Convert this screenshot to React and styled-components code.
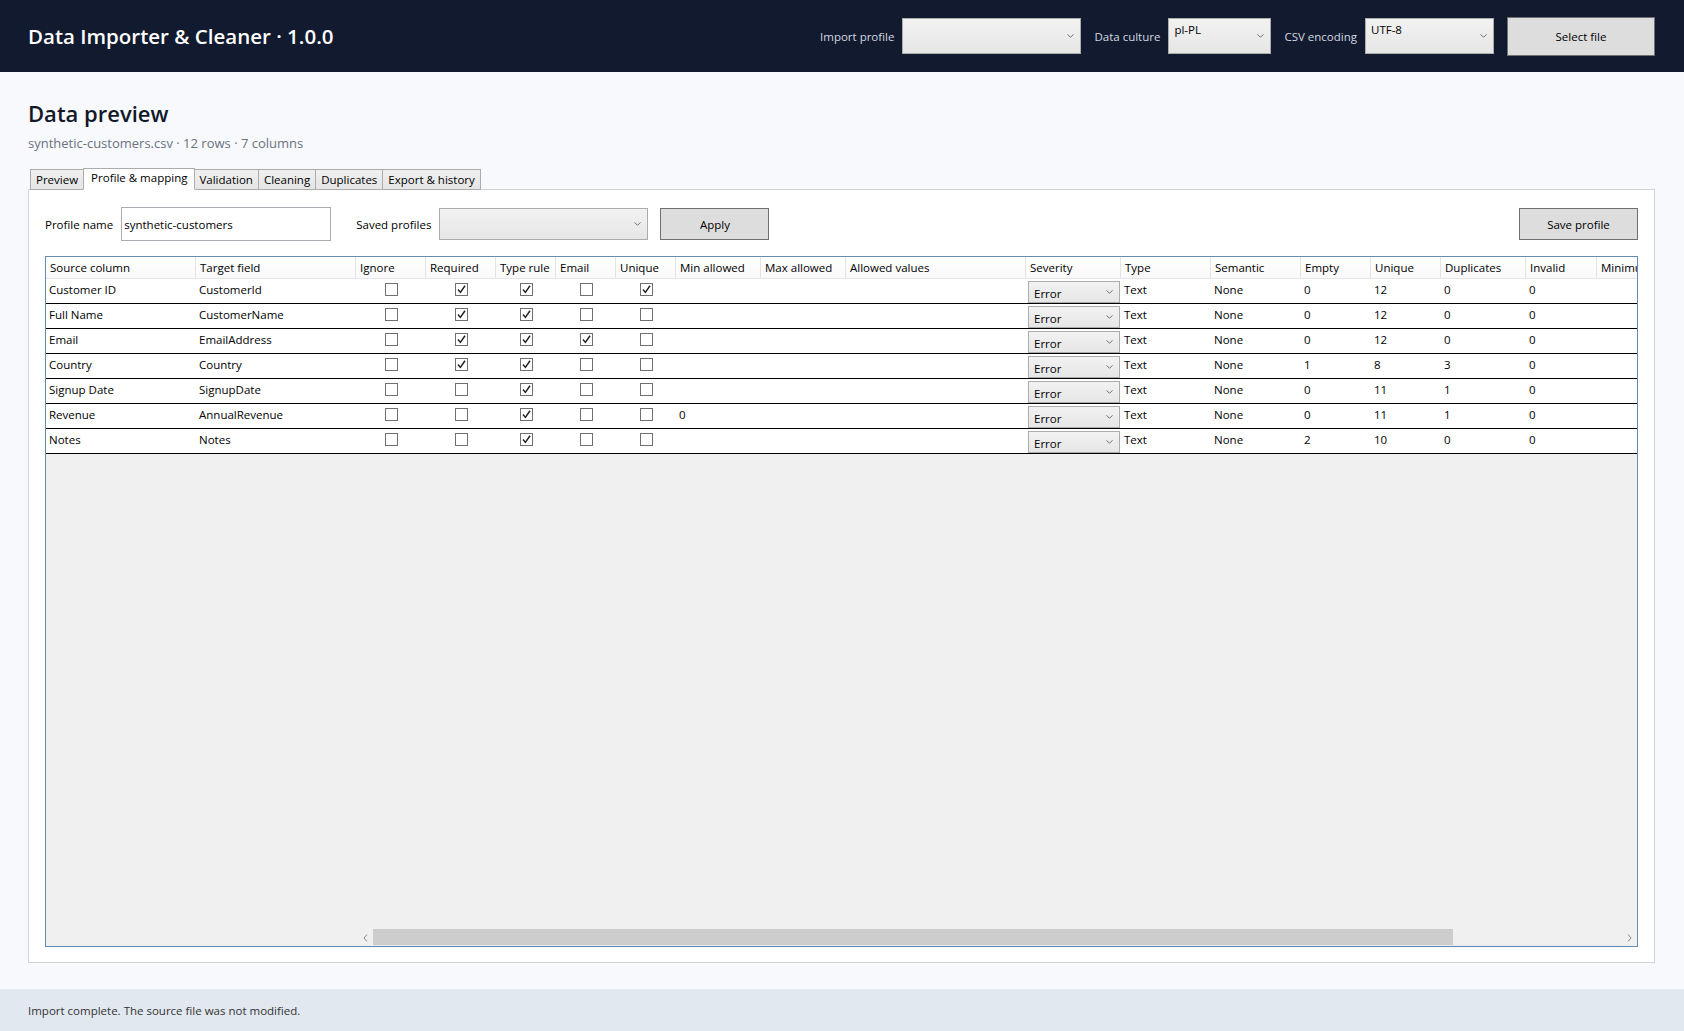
import React from "react";
import styled, { createGlobalStyle } from "styled-components";

// Global page reset
const GlobalStyle = createGlobalStyle`
  html, body {
    margin: 0;
    padding: 0;
  }
  body {
    font-family: "Open Sans", "Noto Sans", sans-serif;
    color: #000;
    background: #f7f9fc;
  }
  * {
    box-sizing: border-box;
  }
`;

// Data
const columns = [
  { key: "source", title: "Source column", w: 150 },
  { key: "target", title: "Target field", w: 160 },
  { key: "ignore", title: "Ignore", w: 70, check: true },
  { key: "required", title: "Required", w: 70, check: true },
  { key: "typeRule", title: "Type rule", w: 60, check: true },
  { key: "email", title: "Email", w: 60, check: true },
  { key: "unique", title: "Unique", w: 60, check: true },
  { key: "min", title: "Min allowed", w: 85 },
  { key: "max", title: "Max allowed", w: 85 },
  { key: "allowed", title: "Allowed values", w: 180 },
  { key: "severity", title: "Severity", w: 95, combo: true },
  { key: "type", title: "Type", w: 90 },
  { key: "semantic", title: "Semantic", w: 90 },
  { key: "empty", title: "Empty", w: 70 },
  { key: "uniq", title: "Unique", w: 70 },
  { key: "dup", title: "Duplicates", w: 85 },
  { key: "invalid", title: "Invalid", w: 71 },
  { key: "minimum", title: "Minimum", w: 90 },
  { key: "maximum", title: "Maximum", w: 90 },
];

const row = (source, target, required, email, unique, min, empty, uniq, dup) => ({
  source,
  target,
  ignore: false,
  required,
  typeRule: true,
  email,
  unique,
  min,
  max: "",
  allowed: "",
  severity: "Error",
  type: "Text",
  semantic: "None",
  empty,
  uniq,
  dup,
  invalid: "0",
  minimum: "",
  maximum: "",
});

const rows = [
  row("Customer ID", "CustomerId", true, false, true, "", "0", "12", "0"),
  row("Full Name", "CustomerName", true, false, false, "", "0", "12", "0"),
  row("Email", "EmailAddress", true, true, false, "", "0", "12", "0"),
  row("Country", "Country", true, false, false, "", "1", "8", "3"),
  row("Signup Date", "SignupDate", false, false, false, "", "0", "11", "1"),
  row("Revenue", "AnnualRevenue", false, false, false, "0", "0", "11", "1"),
  row("Notes", "Notes", false, false, false, "", "2", "10", "0"),
];

const tabs = ["Preview", "Profile & mapping", "Validation", "Cleaning", "Duplicates", "Export & history"];

// Layout
const Page = styled.div`
  display: flex;
  flex-direction: column;
  height: 100vh;
`;

const Header = styled.header`
  height: 72px;
  flex-shrink: 0;
  background: #111a2e;
  display: flex;
  align-items: center;
  justify-content: space-between;
  padding: 0 29px 0 28px;
`;

const AppTitle = styled.h1`
  margin: 0;
  color: #fff;
  font-size: 20.5px;
  font-weight: 600;
`;

const Toolbar = styled.div`
  display: flex;
  align-items: center;
  gap: 13px;
`;

const Field = styled.label`
  display: flex;
  align-items: center;
  gap: 8px;
  font-size: 11.5px;
  color: ${(p) => (p.$dark ? "#d3d8e0" : "#000")};
`;

const Combo = styled.div`
  position: relative;
  width: ${(p) => p.$w}px;
  height: ${(p) => p.$h || 36}px;
  background: linear-gradient(#f2f2f2, #e6e6e6);
  border: 1px solid #acacac;
  font-size: 11.5px;
  color: #000;
  padding: ${(p) => p.$pad || "3px 5px"};
  line-height: 16px;
  flex-shrink: 0;
`;

const Chevron = styled.svg`
  position: absolute;
  right: ${(p) => p.$right || 6}px;
  top: 50%;
  transform: translateY(-50%);
`;

const Button = styled.button`
  width: ${(p) => p.$w}px;
  height: ${(p) => p.$h}px;
  background: #dddddd;
  border: 1px solid #707070;
  font-family: inherit;
  font-size: 11.5px;
  color: #000;
  padding: 0;
  margin-left: ${(p) => (p.$push ? "auto" : "0")};
`;

const Main = styled.main`
  flex: 1;
  display: flex;
  flex-direction: column;
  padding: 26px 29px 26px 28px;
  min-height: 0;
`;

const Title = styled.h2`
  margin: 0;
  font-size: 22px;
  line-height: 30px;
  font-weight: 600;
  color: #111827;
`;

const Subtitle = styled.div`
  margin-top: 6px;
  font-size: 13px;
  line-height: 18px;
  color: #6b7280;
`;

const TabStrip = styled.div`
  display: flex;
  align-items: flex-end;
  margin-top: 16px;
  padding-left: 2px;
  height: 22px;
  position: relative;
  z-index: 1;
  margin-bottom: -1px;
`;

const Tab = styled.div`
  height: ${(p) => (p.$active ? 22 : 21)}px;
  padding: 0 ${(p) => (p.$active ? 7 : 5)}px;
  margin: 0 ${(p) => (p.$active ? -1 : 0)}px 0 -1px;
  border: 1px solid #acacac;
  border-bottom: ${(p) => (p.$active ? "1px solid #fff" : "1px solid #acacac")};
  background: ${(p) => (p.$active ? "#fff" : "linear-gradient(#f0f0f0, #e5e5e5)")};
  font-size: 11.5px;
  line-height: ${(p) => (p.$active ? 17 : 19)}px;
  position: relative;
  z-index: ${(p) => (p.$active ? 2 : 1)};
  white-space: nowrap;
  &:first-child {
    margin-left: 0;
  }
`;

const Panel = styled.section`
  flex: 1;
  min-height: 0;
  background: #fff;
  border: 1px solid #cfd3da;
  padding: 17px 16px 15px 16px;
  display: flex;
  flex-direction: column;
`;

const FormRow = styled.div`
  display: flex;
  align-items: center;
  height: 34px;
  flex-shrink: 0;
`;

const TextBox = styled.div`
  width: 210px;
  height: 34px;
  border: 1px solid #abadb3;
  background: #fff;
  font-size: 11.5px;
  display: flex;
  align-items: center;
  padding-left: 2px;
`;

const Spacer = styled.div`
  width: ${(p) => p.$w}px;
  flex-shrink: 0;
`;

// Data grid
const Grid = styled.div`
  margin-top: 15px;
  flex: 1;
  min-height: 0;
  border: 1px solid #688caf;
  background: #f0f0f0;
  display: flex;
  flex-direction: column;
  overflow: hidden;
`;

const Viewport = styled.div`
  flex: 1;
  min-height: 0;
  overflow: hidden;
`;

const HeaderRow = styled.div`
  display: flex;
  height: 22px;
  background: linear-gradient(#ffffff, #f9f9f9);
  border-bottom: 1px solid #e3e6ea;
  width: max-content;
  min-width: 100%;
`;

const HeaderCell = styled.div`
  width: ${(p) => p.$w}px;
  flex-shrink: 0;
  padding-left: 4px;
  font-size: 11.5px;
  line-height: 21px;
  border-right: 1px solid #e2e4e7;
  white-space: nowrap;
  overflow: hidden;
`;

const Row = styled.div`
  display: flex;
  height: 25px;
  background: #fff;
  border-bottom: 1px solid #000;
  width: max-content;
  min-width: 100%;
`;

const Cell = styled.div`
  width: ${(p) => p.$w}px;
  flex-shrink: 0;
  padding: ${(p) => (p.$center ? "4px 0 0" : p.$combo ? "2px 0 0 2px" : "3px 0 0 3px")};
  font-size: 11.5px;
  line-height: 16px;
  white-space: nowrap;
  overflow: hidden;
  display: flex;
  justify-content: ${(p) => (p.$center ? "center" : "flex-start")};
  align-items: flex-start;
`;

const Box = styled.span`
  width: 13px;
  height: 13px;
  border: 1px solid #707070;
  background: #fff;
  display: flex;
  align-items: center;
  justify-content: center;
`;

const HScroll = styled.div`
  height: 17px;
  flex-shrink: 0;
  display: flex;
  margin-left: 312px;
  background: #f0f0f0;
`;

const Arrow = styled.div`
  width: 15px;
  display: flex;
  align-items: center;
  justify-content: center;
  flex-shrink: 0;
`;

const Track = styled.div`
  flex: 1;
  display: flex;
  border-bottom: 1px solid #e6eaef;
`;

const Thumb = styled.div`
  width: ${(p) => p.$pct}%;
  background: #cdcdcd;
`;

const StatusBar = styled.footer`
  height: 42px;
  flex-shrink: 0;
  background: #e2e8f0;
  padding-left: 28px;
  display: flex;
  align-items: center;
  font-size: 11.5px;
  color: #333;
`;

// Small parts
function ChevronDown({ right }) {
  return (
    <Chevron $right={right} width="7" height="5" viewBox="0 0 7 5">
      <path d="M0.5 0.8 L3.5 3.8 L6.5 0.8" fill="none" stroke="#707070" strokeWidth="1" />
    </Chevron>
  );
}

function CheckBox({ checked }) {
  return (
    <Box>
      {checked && (
        <svg width="9" height="9" viewBox="0 0 9 9">
          <path d="M1 4.6 L3.4 7.4 L8 0.8" fill="none" stroke="#212121" strokeWidth="1.5" />
        </svg>
      )}
    </Box>
  );
}

function ArrowGlyph({ dir }) {
  return (
    <svg width="5" height="8" viewBox="0 0 5 8">
      <path
        d={dir === "left" ? "M4 0.5 L1 4 L4 7.5" : "M1 0.5 L4 4 L1 7.5"}
        fill="none"
        stroke="#8a8a8a"
        strokeWidth="1"
      />
    </svg>
  );
}

function MappingGrid() {
  return (
    <Grid>
      <Viewport>
        <HeaderRow>
          {columns.map((c) => (
            <HeaderCell key={c.key} $w={c.w}>
              {c.title}
            </HeaderCell>
          ))}
        </HeaderRow>
        {rows.map((r) => (
          <Row key={r.source}>
            {columns.map((c) => {
              if (c.check) {
                return (
                  <Cell key={c.key} $w={c.w} $center>
                    <CheckBox checked={r[c.key]} />
                  </Cell>
                );
              }
              if (c.combo) {
                return (
                  <Cell key={c.key} $w={c.w} $combo>
                    <Combo $w={92} $h={22} $pad="4px 0 0 5px">
                      {r[c.key]}
                      <ChevronDown right={6} />
                    </Combo>
                  </Cell>
                );
              }
              return (
                <Cell key={c.key} $w={c.w}>
                  {r[c.key]}
                </Cell>
              );
            })}
          </Row>
        ))}
      </Viewport>
      <HScroll>
        <Arrow>
          <ArrowGlyph dir="left" />
        </Arrow>
        <Track>
          <Thumb $pct={86.5} />
        </Track>
        <Arrow>
          <ArrowGlyph dir="right" />
        </Arrow>
      </HScroll>
    </Grid>
  );
}

export default function App() {
  return (
    <Page>
      <GlobalStyle />
      <Header>
        <AppTitle>Data Importer &amp; Cleaner · 1.0.0</AppTitle>
        <Toolbar>
          <Field $dark>
            Import profile
            <Combo $w={179}>
              <ChevronDown />
            </Combo>
          </Field>
          <Field $dark>
            Data culture
            <Combo $w={103}>
              pl-PL
              <ChevronDown />
            </Combo>
          </Field>
          <Field $dark>
            CSV encoding
            <Combo $w={129}>
              UTF-8
              <ChevronDown />
            </Combo>
          </Field>
          <Button $w={148} $h={39}>
            Select file
          </Button>
        </Toolbar>
      </Header>

      <Main>
        <Title>Data preview</Title>
        <Subtitle>synthetic-customers.csv · 12 rows · 7 columns</Subtitle>
        <TabStrip>
          {tabs.map((t) => (
            <Tab key={t} $active={t === "Profile & mapping"}>
              {t}
            </Tab>
          ))}
        </TabStrip>
        <Panel>
          <FormRow>
            <Field>
              Profile name
              <TextBox>synthetic-customers</TextBox>
            </Field>
            <Spacer $w={25} />
            <Field>
              Saved profiles
              <Combo $w={209} $h={32}>
                <ChevronDown />
              </Combo>
            </Field>
            <Spacer $w={12} />
            <Button $w={109} $h={32}>
              Apply
            </Button>
            <Button $w={119} $h={32} $push>
              Save profile
            </Button>
          </FormRow>
          <MappingGrid />
        </Panel>
      </Main>

      <StatusBar>Import complete. The source file was not modified.</StatusBar>
    </Page>
  );
}
